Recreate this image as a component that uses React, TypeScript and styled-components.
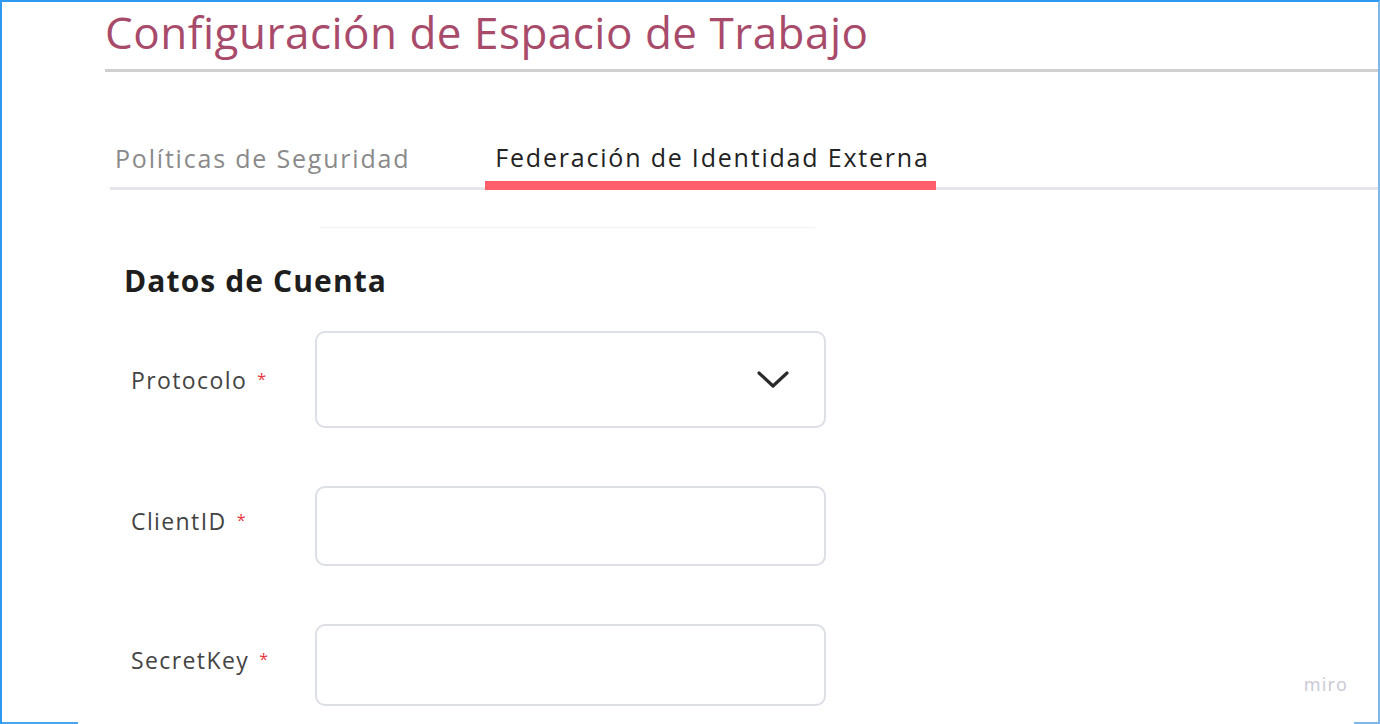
import * as React from 'react'
import styled, { createGlobalStyle } from 'styled-components'

const GlobalStyle = createGlobalStyle`
  html, body {
    margin: 0;
    padding: 0;
    background: #ffffff;
  }
  body {
    font-family: 'Open Sans', 'Noto Sans', sans-serif;
  }
  * {
    box-sizing: border-box;
  }
`

const Frame = styled.div`
  position: relative;
  width: 1380px;
  height: 724px;
  overflow: hidden;
  border-top: 2px solid #2e9bf0;
  border-left: 2px solid #2e9bf0;
  border-right: 2px solid #7cb9ea;

  &::before,
  &::after {
    content: '';
    position: absolute;
    bottom: 0;
    height: 2px;
    background: #4aa5ee;
  }
  &::before {
    left: 0;
    width: 76px;
  }
  &::after {
    right: 0;
    width: 24px;
    background: #7cb9ea;
  }
`

const Header = styled.header`
  padding-left: 103px;
`

const Title = styled.h1`
  margin: 0;
  padding-top: 5px;
  font-size: 44px;
  line-height: 50px;
  font-weight: 400;
  color: #a84b6b;
  letter-spacing: 0.5px;
`

const TitleRule = styled.div`
  margin-top: 12px;
  height: 3px;
  background: #cfcfcf;
`

const TabBar = styled.nav`
  display: flex;
  align-items: flex-end;
  margin: 70px 0 0 108px;
  border-bottom: 3px solid #e6e6ea;
`

const Tab = styled.div<{ $active?: boolean }>`
  font-size: 25px;
  line-height: 30px;
  letter-spacing: 1.8px;
  color: ${p => (p.$active ? '#222222' : '#8a8a8a')};
  padding: ${p => (p.$active ? '0 6px 9px 10px' : '0 6px 14px 5px')};
  margin-right: ${p => (p.$active ? '0' : '69px')};
  border-bottom: ${p => (p.$active ? '9px solid #ff5e6a' : 'none')};
  margin-bottom: ${p => (p.$active ? '-3px' : '0')};
`

const Section = styled.section`
  padding-left: 122px;
`

const FaintRule = styled.div`
  margin: 37px 0 0 196px;
  width: 495px;
  height: 1px;
  background: #f2f2f2;
`

const SectionTitle = styled.h2`
  margin: 35px 0 0;
  font-size: 30px;
  line-height: 36px;
  font-weight: 700;
  color: #1e1e1e;
  letter-spacing: 1.1px;
`

const Form = styled.div`
  display: flex;
  flex-direction: column;
  gap: 58px;
  margin-top: 32px;
`

const Row = styled.div`
  display: flex;
  align-items: center;
`

const Label = styled.label<{ $lift?: number }>`
  width: 191px;
  padding-left: 7px;
  margin-bottom: ${p => p.$lift ?? 0}px;
  font-size: 23px;
  color: #444444;
  letter-spacing: 1.4px;
`

const Required = styled.span`
  color: #e8353d;
  font-size: 16px;
  margin-left: 10px;
  position: relative;
  top: -4px;
`

const Field = styled.div<{ $height: number }>`
  display: flex;
  align-items: center;
  justify-content: flex-end;
  width: 511px;
  height: ${p => p.$height}px;
  padding-right: 34px;
  border: 2px solid #dcdfe4;
  border-radius: 10px;
  background: #ffffff;
`

const Watermark = styled.div`
  position: absolute;
  right: 30px;
  bottom: 28px;
  font-family: 'Noto Sans', sans-serif;
  font-size: 18px;
  letter-spacing: 1.2px;
  color: #cacad6;
`

const Chevron = () => (
  <svg width="34" height="22" viewBox="0 0 34 22" fill="none">
    <path d="M3 4 L17 17 L31 4" stroke="#2b2b2b" strokeWidth="3.2" strokeLinecap="round" strokeLinejoin="round" />
  </svg>
)

const fields = [
  { label: 'ClientID', height: 80, lift: 10 },
  { label: 'SecretKey', height: 82, lift: 10 }
]

export default function App() {
  return (
    <Frame>
      <GlobalStyle />
      <Header>
        <Title>Configuración de Espacio de Trabajo</Title>
        <TitleRule />
      </Header>
      <TabBar>
        <Tab>Políticas de Seguridad</Tab>
        <Tab $active>Federación de Identidad Externa</Tab>
      </TabBar>
      <Section>
        <FaintRule />
        <SectionTitle>Datos de Cuenta</SectionTitle>
        <Form>
          <Row>
            <Label>
              Protocolo<Required>*</Required>
            </Label>
            <Field $height={97}>
              <Chevron />
            </Field>
          </Row>
          {fields.map(f => (
            <Row key={f.label}>
              <Label $lift={f.lift}>
                {f.label}
                <Required>*</Required>
              </Label>
              <Field $height={f.height} />
            </Row>
          ))}
        </Form>
      </Section>
      <Watermark>miro</Watermark>
    </Frame>
  )
}
